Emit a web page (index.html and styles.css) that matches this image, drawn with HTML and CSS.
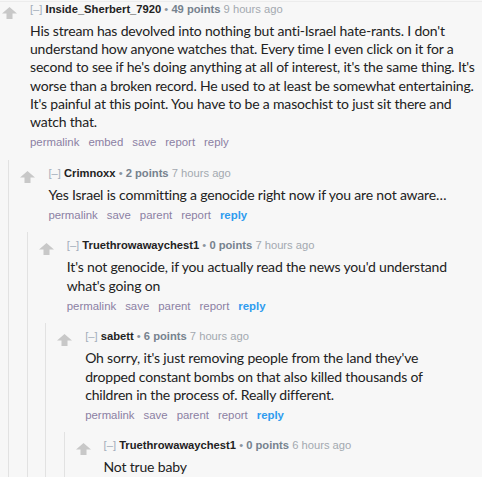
FILE: index.html
```html
<!DOCTYPE html>
<html>
<head>
<meta charset="utf-8">
<link rel="stylesheet" href="styles.css">
</head>
<body>
<div class="thread">
  <div class="comment top">
    <div class="row">
      <div class="vote"><svg class="arrow" viewBox="0 0 15 12"><path d="M7.5 0 L15 6.5 L10.5 6.5 L10.5 12 L4.5 12 L4.5 6.5 L0 6.5 Z"/></svg></div>
      <div class="entry">
        <p class="tagline"><span class="expand">[–]</span> <span class="author">Inside_Sherbert_7920</span> <span class="bullet">•</span> <span class="score">49 points</span> <span class="time">9 hours ago</span></p>
        <div class="md"><p>His stream has devolved into nothing but anti-Israel hate-rants. I don't understand how anyone watches that. Every time I even click on it for a second to see if he's doing anything at all of interest, it's the same thing. It's worse than a broken record. He used to at least be somewhat entertaining. It's painful at this point. You have to be a masochist to just sit there and watch that.</p></div>
        <ul class="buttons"><li>permalink</li><li>embed</li><li>save</li><li>report</li><li>reply</li></ul>
      </div>
    </div>
    <div class="children">
      <div class="comment">
        <div class="row">
          <div class="vote"><svg class="arrow" viewBox="0 0 15 12"><path d="M7.5 0 L15 6.5 L10.5 6.5 L10.5 12 L4.5 12 L4.5 6.5 L0 6.5 Z"/></svg></div>
          <div class="entry">
            <p class="tagline"><span class="expand">[–]</span> <span class="author">Crimnoxx</span> <span class="bullet">•</span> <span class="score">2 points</span> <span class="time">7 hours ago</span></p>
            <div class="md"><p>Yes Israel is committing a genocide right now if you are not aware…</p></div>
            <ul class="buttons"><li>permalink</li><li>save</li><li>parent</li><li>report</li><li class="reply">reply</li></ul>
          </div>
        </div>
        <div class="children">
          <div class="comment">
            <div class="row">
              <div class="vote"><svg class="arrow" viewBox="0 0 15 12"><path d="M7.5 0 L15 6.5 L10.5 6.5 L10.5 12 L4.5 12 L4.5 6.5 L0 6.5 Z"/></svg></div>
              <div class="entry">
                <p class="tagline"><span class="expand">[–]</span> <span class="author">Truethrowawaychest1</span> <span class="bullet">•</span> <span class="score">0 points</span> <span class="time">7 hours ago</span></p>
                <div class="md"><p>It's not genocide, if you actually read the news you'd understand what's going on</p></div>
                <ul class="buttons"><li>permalink</li><li>save</li><li>parent</li><li>report</li><li class="reply">reply</li></ul>
              </div>
            </div>
            <div class="children">
              <div class="comment">
                <div class="row">
                  <div class="vote"><svg class="arrow" viewBox="0 0 15 12"><path d="M7.5 0 L15 6.5 L10.5 6.5 L10.5 12 L4.5 12 L4.5 6.5 L0 6.5 Z"/></svg></div>
                  <div class="entry">
                    <p class="tagline"><span class="expand">[–]</span> <span class="author">sabett</span> <span class="bullet">•</span> <span class="score">6 points</span> <span class="time">7 hours ago</span></p>
                    <div class="md"><p>Oh sorry, it's just removing people from the land they've dropped constant bombs on that also killed thousands of children in the process of. Really different.</p></div>
                    <ul class="buttons"><li>permalink</li><li>save</li><li>parent</li><li>report</li><li class="reply">reply</li></ul>
                  </div>
                </div>
                <div class="children">
                  <div class="comment">
                    <div class="row">
                      <div class="vote"><svg class="arrow" viewBox="0 0 15 12"><path d="M7.5 0 L15 6.5 L10.5 6.5 L10.5 12 L4.5 12 L4.5 6.5 L0 6.5 Z"/></svg></div>
                      <div class="entry">
                        <p class="tagline"><span class="expand">[–]</span> <span class="author">Truethrowawaychest1</span> <span class="bullet">•</span> <span class="score">0 points</span> <span class="time">6 hours ago</span></p>
                        <div class="md"><p>Not true baby</p></div>
                      </div>
                    </div>
                  </div>
                </div>
              </div>
            </div>
          </div>
        </div>
      </div>
    </div>
  </div>
</div>
</body>
</html>
```

FILE: styles.css
```css
html, body {
  margin: 0;
  padding: 0;
  background: #f7f7f7;
  overflow: hidden;
}
body {
  width: 482px;
  height: 477px;
}
.thread {
  margin-top: 1px;
  border-top: 1px solid #ececec;
}
.comment {
  border-left: 1px solid #e2e2e2;
  padding-top: 6px;
  padding-right: 9px;
}
.comment.top {
  margin-left: -10px;
  border-left-color: transparent;
  padding-top: 0;
  padding-right: 0;
}
.row {
  display: flex;
  align-items: flex-start;
}
.vote {
  flex: none;
  margin-left: 11px;
  width: 15px;
  padding-top: 5px;
}
.arrow {
  display: block;
  width: 15px;
  height: 12px;
  fill: #c8c8c8;
}
.entry {
  flex: 1;
  min-width: 0;
  margin-left: 13px;
}
.tagline {
  margin: 0;
  font-family: "Liberation Sans", Arial, sans-serif;
  font-size: 11.2px;
  line-height: 14px;
  color: #888;
  white-space: nowrap;
}
.expand {
  color: #a3aebb;
}
.author {
  color: #222;
  font-weight: bold;
}
.bullet {
  color: #8a949e;
}
.score {
  color: #76828e;
  font-weight: bold;
}
.time {
  color: #a3a9b0;
}
.md {
  margin-top: 6px;
  font-family: Lato, "Open Sans", sans-serif;
  font-size: 14px;
  letter-spacing: -0.18px;
  line-height: 18.2px;
  color: #222;
}
.md p {
  margin: 0;
}
.buttons {
  list-style: none;
  margin: 4px 0 0;
  padding: 0;
  display: flex;
  gap: 9px;
  font-family: "Liberation Sans", Arial, sans-serif;
  font-size: 11.4px;
  line-height: 14px;
  color: #8b80a3;
}
.buttons .reply {
  color: #2f9cef;
  font-weight: bold;
}
.children {
  margin-left: 17.4px;
  margin-top: 10.5px;
}
```
